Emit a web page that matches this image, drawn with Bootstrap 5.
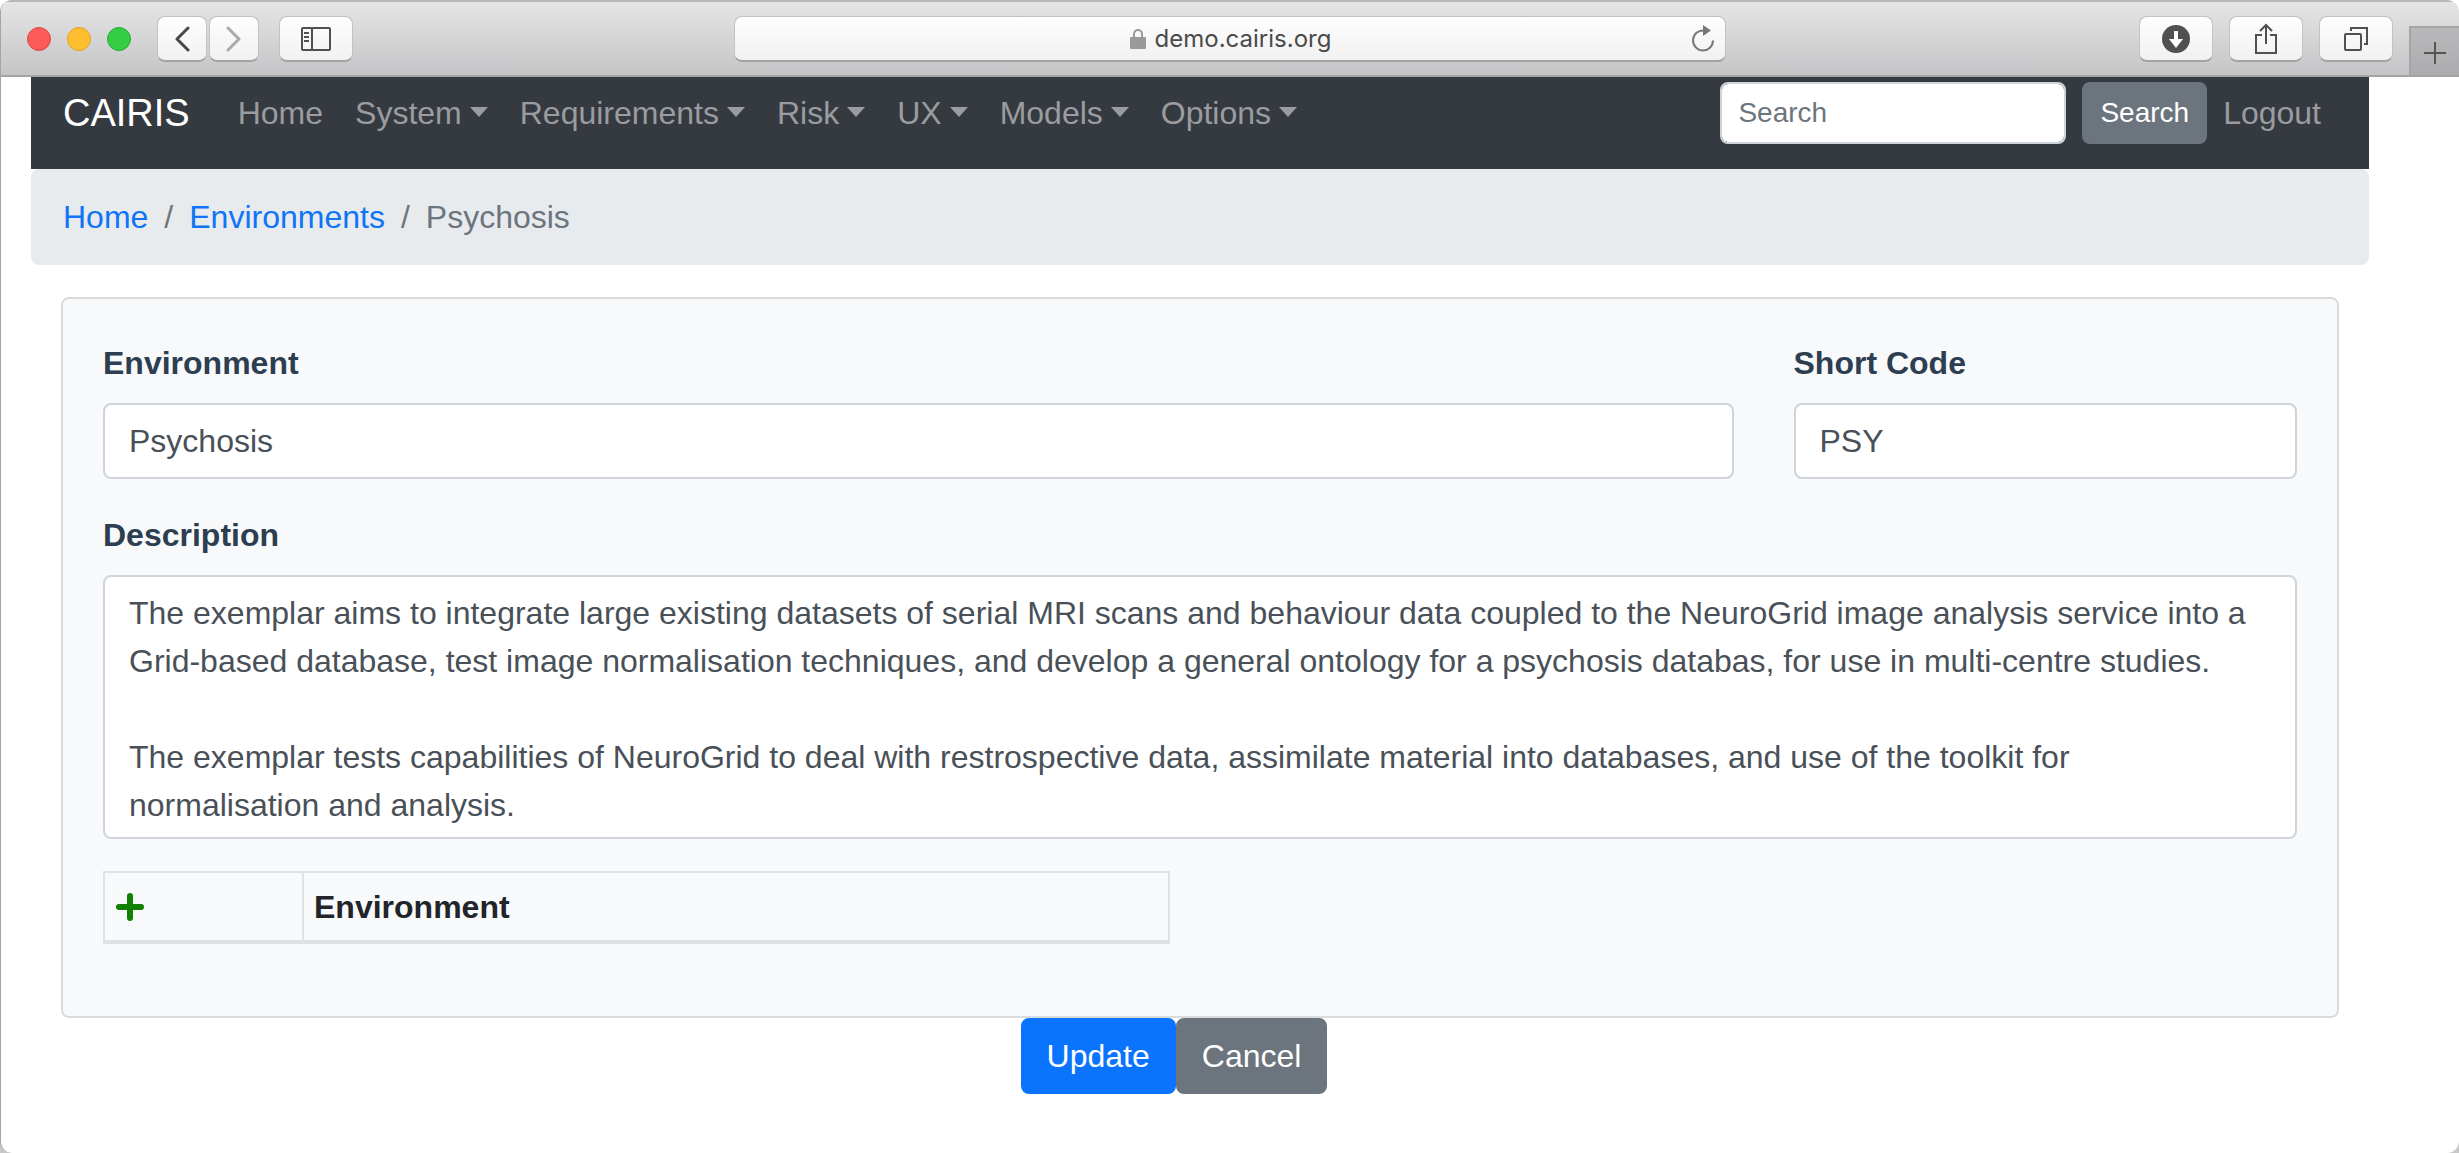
<!DOCTYPE html>
<html lang="en">
<head>
<meta charset="utf-8">
<meta name="viewport" content="width=device-width, initial-scale=1">
<title>CAIRIS</title>
<link href="https://cdn.jsdelivr.net/npm/bootstrap@5.3.0/dist/css/bootstrap.min.css" rel="stylesheet">
<style>
  body { font-family: "Liberation Sans", Arial, sans-serif; font-size: 32px; line-height: 48px; color: #212529; background: linear-gradient(#fff 50%, #c8c8c8 50%); }
  .window { min-height: 100vh; background: #fff; border-left: 1px solid #a5a5a5; border-radius: 12px; overflow: hidden; }

  /* browser toolbar */
  .toolbar { display: grid; grid-template-columns: 1fr minmax(0, 992px) 1fr; height: 77px; padding-top: 1px; border-top: 2px solid #b9b7ba; border-bottom: 2px solid #a3a2a4; background: linear-gradient(#e6e5e6, #c5c4c6); }
  .toolbar-start { padding-left: 26px; }
  .lamps { gap: 16px; margin-right: 26px; }
  .lamp { width: 24px; height: 24px; border-radius: 50%; border: 1px solid; }
  .lamp-close { background: #fc5b57; border-color: #df4744; }
  .lamp-min { background: #fdbe2f; border-color: #dfa023; }
  .lamp-max { background: #35cd43; border-color: #27aa35; }
  .history { gap: 2px; margin-right: 20px; }
  .tool { display: flex; align-items: center; justify-content: center; height: 46px; width: 74px; padding: 0; border: 1px solid #c2c1c3; border-bottom: 2px solid #a3a2a4; border-radius: 8px; background: linear-gradient(#fefefe, #f1f1f1); color: #505050; }
  .tool-nav { width: 50px; }
  .address { width: auto; font: 24px/32px Inter, sans-serif; color: #4a4a4a; padding: 0 10px; }
  .plain { border: 0; background: none; padding: 0; display: flex; }
  .new-tab { display: flex; align-items: center; justify-content: center; width: 50px; height: 49px; border: 0; border-left: 2px solid #a5a4a6; border-top: 2px solid #a5a4a6; background: linear-gradient(#b9b8ba, #acabad); padding: 2px 0 0; }

  /* application */
  .page-area { padding: 0 90px 0 30px; }
  .navbar { background: #353a41; padding: 0 32px 20px; --bs-navbar-brand-font-size: 38px; --bs-navbar-nav-link-padding-x: 16px; }
  .navbar-brand { color: #fff; line-height: 72px; padding: 0; margin-right: 32px; }
  .navbar-brand:hover { color: #fff; }
  .navbar .nav-link { font-size: 32px; line-height: 72px; padding: 0 16px; color: #9a9c9f; white-space: nowrap; }
  .dropdown-toggle::after { margin-left: 8px; vertical-align: 7px; border-top-width: 10px; border-right-width: 9px; border-left-width: 9px; }
  .form-control { font-size: 32px; line-height: 48px; color: #495057; padding: 12px 24px; border: 2px solid #ced4da; border-radius: 8px; background-color: #fff; }
  .find-box { width: 346px; height: 62px; font-size: 28px; line-height: 42px; padding: 8px 16px; }
  .find-box::placeholder { color: #6c757d; opacity: 1; }
  .btn { font-size: 32px; line-height: 48px; padding: 12px 24px; border-width: 2px; border-radius: 8px; }
  .btn-find { font-size: 28px; line-height: 42px; padding: 8px 16px; }
  .btn-primary { --bs-btn-bg: #0a74ff; --bs-btn-border-color: #0a74ff; }
  .btn-secondary { --bs-btn-bg: #6c747d; --bs-btn-border-color: #6c747d; }
  .breadcrumb { padding: 24px 32px; background: #e8ebee; border-radius: 8px; margin-bottom: 32px; font-size: 32px; --bs-breadcrumb-item-padding-x: 16px; --bs-breadcrumb-divider-color: #6c757d; --bs-breadcrumb-item-active-color: #6c757d; }
  .breadcrumb a { color: #0f74f5; text-decoration: none; }
  .card { margin: 0 30px; background: #f8f9fb; border: 2px solid #dadbdd; border-radius: 8px; }
  .card-body { padding: 40px; }
  .fields { --bs-gutter-x: 60px; margin-bottom: 32px; }
  .form-label { font-size: 32px; font-weight: 700; color: #2c3e50; margin-bottom: 16px; display: block; }
  textarea.form-control { height: 264px; padding-right: 32px; margin-bottom: 32px; resize: none; overflow: hidden; }
  .env-table { width: 1067px; max-width: 100%; border-collapse: collapse; margin-bottom: 32px; }
  .env-table th { border: 2px solid #dee2e6; border-bottom-width: 4px; padding: 8px 10px; height: 70px; }
  .add-cell { width: 199px; }
  .actions { padding-right: 52px; }
</style>
</head>
<body>
<div class="window d-flex flex-column">
  <header class="toolbar">
    <div class="toolbar-start d-flex align-items-center">
      <div class="lamps d-flex">
        <span class="lamp lamp-close"></span><span class="lamp lamp-min"></span><span class="lamp lamp-max"></span>
      </div>
      <div class="history d-flex">
        <button class="tool tool-nav" type="button" aria-label="Back"><svg width="16" height="34" viewBox="0 0 16 34" fill="none" stroke="#484848" stroke-width="3" stroke-linecap="round" stroke-linejoin="round"><path d="M14 6 3 17l11 11"/></svg></button>
        <button class="tool tool-nav" type="button" aria-label="Forward"><svg width="16" height="34" viewBox="0 0 16 34" fill="none" stroke="#aaa" stroke-width="3" stroke-linecap="round" stroke-linejoin="round"><path d="m2 6 11 11L2 28"/></svg></button>
      </div>
      <button class="tool" type="button" aria-label="Sidebar"><svg width="32" height="26" viewBox="0 0 32 26" fill="none" stroke="#505050" stroke-width="2"><rect x="2" y="2" width="28" height="22" rx="1"/><path d="M12 2v22M4 7h5M4 11h5M4 15h5"/></svg></button>
    </div>
    <div class="d-flex align-items-center">
      <div class="tool address flex-grow-1">
        <span class="flex-grow-1 d-flex align-items-center justify-content-center gap-2 ps-4">
          <svg width="18" height="22" viewBox="0 0 18 22"><path d="M5 10V6a4 4 0 0 1 8 0v4" fill="none" stroke="#999" stroke-width="2"/><rect x="1" y="9" width="16" height="12" rx="1" fill="#999"/></svg>
          <span>demo.cairis.org</span>
        </span>
        <button class="plain" type="button" aria-label="Reload"><svg width="24" height="30" viewBox="0 0 24 30"><path d="M13 6.500A10 10 0 1 0 22 16.500" fill="none" stroke="#777" stroke-width="2"/><path d="M12 1v11l8-5.500z" fill="#777"/></svg></button>
      </div>
    </div>
    <div class="d-flex align-items-center justify-content-end gap-3">
      <button class="tool" type="button" aria-label="Downloads"><svg width="30" height="30" viewBox="0 0 30 30"><circle cx="15" cy="15" r="14" fill="#505050"/><path d="M15 7v9" stroke="#fff" stroke-width="4"/><path d="M8 15h14l-7 9z" fill="#fff"/></svg></button>
      <button class="tool" type="button" aria-label="Share"><svg width="26" height="34" viewBox="0 0 26 34" fill="none" stroke="#505050" stroke-width="2"><path d="M9 13H3v18h20V13h-6M13 22V3M7 9l6-6 6 6"/></svg></button>
      <button class="tool" type="button" aria-label="Tabs"><svg width="28" height="28" viewBox="0 0 28 28" fill="none" stroke="#505050" stroke-width="2"><rect x="3" y="9" width="16" height="16" rx="1"/><path d="M9 6V3h16v16h-3"/></svg></button>
      <button class="new-tab align-self-end" type="button" aria-label="New tab"><svg width="24" height="24" viewBox="0 0 24 24" stroke="#555" stroke-width="2"><path d="M12 1v22M1 12h22"/></svg></button>
    </div>
  </header>

  <main class="page-area">
    <nav class="navbar navbar-expand">
      <a class="navbar-brand" href="#">CAIRIS</a>
      <ul class="navbar-nav me-auto">
        <li class="nav-item"><a class="nav-link" href="#">Home</a></li>
        <li class="nav-item"><a class="nav-link dropdown-toggle" href="#">System</a></li>
        <li class="nav-item"><a class="nav-link dropdown-toggle" href="#">Requirements</a></li>
        <li class="nav-item"><a class="nav-link dropdown-toggle" href="#">Risk</a></li>
        <li class="nav-item"><a class="nav-link dropdown-toggle" href="#">UX</a></li>
        <li class="nav-item"><a class="nav-link dropdown-toggle" href="#">Models</a></li>
        <li class="nav-item"><a class="nav-link dropdown-toggle" href="#">Options</a></li>
      </ul>
      <form class="d-flex gap-3" role="search">
        <input class="form-control find-box" type="search" placeholder="Search" aria-label="Search">
        <button class="btn btn-secondary btn-find" type="button">Search</button>
      </form>
      <a class="nav-link" href="#">Logout</a>
    </nav>
    <nav aria-label="breadcrumb">
      <ol class="breadcrumb">
        <li class="breadcrumb-item"><a href="#">Home</a></li>
        <li class="breadcrumb-item"><a href="#">Environments</a></li>
        <li class="breadcrumb-item active" aria-current="page">Psychosis</li>
      </ol>
    </nav>
    <form>
      <div class="card">
        <div class="card-body">
          <div class="row fields">
            <div class="col-9">
              <label class="form-label" for="envName">Environment</label>
              <input class="form-control" id="envName" type="text" value="Psychosis">
            </div>
            <div class="col-3">
              <label class="form-label" for="envCode">Short Code</label>
              <input class="form-control" id="envCode" type="text" value="PSY">
            </div>
          </div>
          <label class="form-label" for="envText">Description</label>
          <textarea class="form-control" id="envText">The exemplar aims to integrate large existing datasets of serial MRI scans and behaviour data coupled to the NeuroGrid image analysis service into a Grid-based database, test image normalisation techniques, and develop a general ontology for a psychosis databas, for use in multi-centre studies.

The exemplar tests capabilities of NeuroGrid to deal with restrospective data, assimilate material into databases, and use of the toolkit for normalisation and analysis.</textarea>
          <table class="env-table">
            <thead><tr>
              <th class="add-cell"><button class="plain" type="button" aria-label="Add environment"><svg width="30" height="30" viewBox="0 0 30 30" stroke="#128000" stroke-width="6" stroke-linecap="round"><path d="M15 4v22M4 15h22"/></svg></button></th>
              <th>Environment</th>
            </tr></thead>
          </table>
        </div>
      </div>
      <div class="actions d-flex justify-content-center">
        <button class="btn btn-primary" type="button">Update</button>
        <button class="btn btn-secondary" type="button">Cancel</button>
      </div>
    </form>
  </main>
</div>
<script src="https://cdn.jsdelivr.net/npm/bootstrap@5.3.0/dist/js/bootstrap.bundle.min.js"></script>
</body>
</html>
